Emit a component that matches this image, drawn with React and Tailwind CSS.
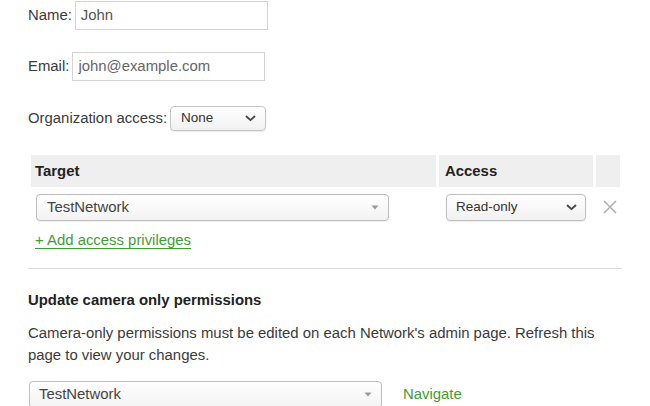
import React from "react";

function Chevron() {
  return (
    <svg width="11" height="7" viewBox="0 0 11 7" className="shrink-0">
      <path d="M1.5 1.5 L5.5 5.2 L9.5 1.5" fill="none" stroke="#444" strokeWidth="1.8" strokeLinecap="round" strokeLinejoin="round" />
    </svg>
  );
}

function Tri() {
  return (
    <svg width="8" height="5" viewBox="0 0 8 5" className="shrink-0">
      <path d="M0.5 0.5 L7.5 0.5 L4 4.5 Z" fill="#999" />
    </svg>
  );
}

export default function App() {
  return (
    <div
      className="w-[650px] h-[406px] overflow-hidden bg-white text-[14.9px] text-[#3b3b3b] pl-[28px] pt-[1px]"
      style={{ fontFamily: '"Liberation Sans", Arial, sans-serif' }}
    >
      {/* Name */}
      <div className="flex items-center h-[29px]">
        <span>Name:</span>
        <div className="ml-[3px] w-[193px] h-[29px] border border-[#d4d4d4] flex items-center px-[5px] text-[#555]">
          John
        </div>
      </div>

      {/* Email */}
      <div className="flex items-center h-[29px] mt-[22px]">
        <span>Email:</span>
        <div className="ml-[3px] w-[193px] h-[29px] border border-[#d4d4d4] flex items-center px-[5px] text-[#666]">
          john@example.com
        </div>
      </div>

      {/* Org access */}
      <div className="flex items-center h-[25px] mt-[25px]">
        <span>Organization access:</span>
        <div className="ml-[3px] w-[96px] h-[25px] rounded-[4px] border border-[#c4c4c4] bg-gradient-to-b from-white to-[#f1f1f1] shadow-[0_1px_1px_rgba(0,0,0,0.08)] flex items-center justify-between pl-[10px] pr-[9px] text-[13.5px] text-[#333]">
          <span>None</span>
          <Chevron />
        </div>
      </div>

      {/* Table */}
      <div className="mt-[24px] ml-[3px] w-[589px]">
        <div className="flex gap-[3px] h-[32px] font-bold text-[#222]">
          <div className="w-[405px] bg-[#efefef] flex items-center pl-[4px]">Target</div>
          <div className="w-[154px] bg-[#efefef] flex items-center pl-[6px]">Access</div>
          <div className="flex-1 bg-[#efefef]"></div>
        </div>
        <div className="flex gap-[3px] mt-[6px] h-[28px] items-center">
          <div className="w-[405px] pl-[5px]">
            <div className="w-[353px] h-[27px] rounded-[4px] border border-[#bdbdbd] bg-gradient-to-b from-white to-[#f3f3f3] shadow-[0_1px_1px_rgba(0,0,0,0.06)] flex items-center justify-between pl-[10px] pr-[9px] text-[#444]">
              <span>TestNetwork</span>
              <Tri />
            </div>
          </div>
          <div className="w-[154px] pl-[7px]">
            <div className="w-[140px] h-[27px] rounded-[4px] border border-[#c0c0c0] bg-gradient-to-b from-white to-[#f1f1f1] shadow-[0_1px_1px_rgba(0,0,0,0.08)] flex items-center justify-between pl-[9px] pr-[8px] text-[13.5px] text-[#333]">
              <span>Read-only</span>
              <Chevron />
            </div>
          </div>
          <div className="flex-1 flex items-center pl-[7px]">
            <svg width="14" height="14" viewBox="0 0 14 14">
              <path d="M1 1 L13 13 M13 1 L1 13" stroke="#b0b0b0" strokeWidth="1.6" fill="none" />
            </svg>
          </div>
        </div>
        <div className="mt-[8px] pl-[4px] h-[22px] flex items-center">
          <span className="text-[#3f9e33] underline underline-offset-[3px] decoration-[#3f9e33]">+ Add access privileges</span>
        </div>
      </div>

      {/* HR */}
      <div className="mt-[17px] w-[594px] h-px bg-[#dcdcdc]"></div>

      {/* Camera */}
      <div className="mt-[22px] font-bold text-[#222] h-[18px] flex items-center">Update camera only permissions</div>
      <p className="mt-[13px] leading-[22px] w-[590px]">
        Camera-only permissions must be edited on each Network's admin page. Refresh this page to view your changes.
      </p>
      <div className="mt-[15px] flex items-start">
        <div className="ml-[1px] w-[353px] h-[27px] rounded-[4px] border border-[#bdbdbd] bg-gradient-to-b from-white to-[#f3f3f3] flex items-center justify-between pl-[9px] pr-[9px] text-[#444]">
          <span>TestNetwork</span>
          <Tri />
        </div>
        <span className="ml-[21px] mt-[2px] text-[#3f9e33]">Navigate</span>
      </div>
    </div>
  );
}
